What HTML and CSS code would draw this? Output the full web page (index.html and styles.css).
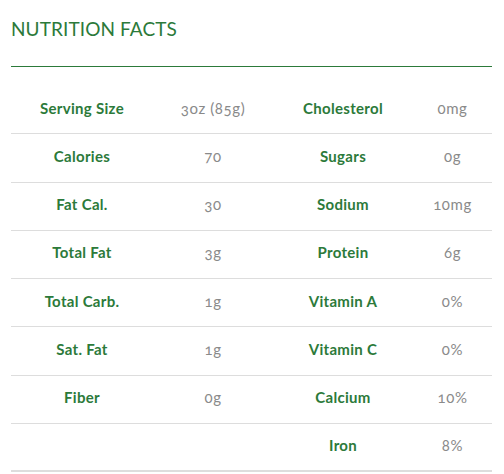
FILE: index.html
```html
<!DOCTYPE html>
<html lang="en">
<head>
    <meta charset="UTF-8">
    <meta name="viewport" content="width=device-width, initial-scale=1.0">
    <title>Nutrition Facts</title>
    <link rel="stylesheet" href="styles.css">
</head>
<body>
    <div class="panel">
        <h2 class="panel-title">NUTRITION FACTS</h2>

        <div class="facts">
            <div class="row">
                <span class="label">Serving Size</span><span class="value">3oz (85g)</span>
                <span class="label">Cholesterol</span><span class="value">0mg</span>
            </div>
            <div class="row">
                <span class="label">Calories</span><span class="value">70</span>
                <span class="label">Sugars</span><span class="value">0g</span>
            </div>
            <div class="row">
                <span class="label">Fat Cal.</span><span class="value">30</span>
                <span class="label">Sodium</span><span class="value">10mg</span>
            </div>
            <div class="row">
                <span class="label">Total Fat</span><span class="value">3g</span>
                <span class="label">Protein</span><span class="value">6g</span>
            </div>
            <div class="row">
                <span class="label">Total Carb.</span><span class="value">1g</span>
                <span class="label">Vitamin A</span><span class="value">0%</span>
            </div>
            <div class="row">
                <span class="label">Sat. Fat</span><span class="value">1g</span>
                <span class="label">Vitamin C</span><span class="value">0%</span>
            </div>
            <div class="row">
                <span class="label">Fiber</span><span class="value">0g</span>
                <span class="label">Calcium</span><span class="value">10%</span>
            </div>
            <div class="row last">
                <span class="label"></span><span class="value"></span>
                <span class="label">Iron</span><span class="value">8%</span>
            </div>
        </div>
    </div>
</body>
</html>
```

FILE: styles.css
```css
:root {
    --green: #2c7a3a;
    --grey: #8a8a8a;
    --rule: #dddddd;
}

body {
    margin: 0;
    background: #fff;
    font-family: Lato, "Open Sans", sans-serif;
}

.panel {
    padding: 0 12px 0 11px;
}

.panel-title {
    margin: 0;
    padding-top: 17px;
    height: 67px;
    box-sizing: border-box;
    border-bottom: 1px solid var(--green);
    font-size: 19px;
    font-weight: 400;
    line-height: 24px;
    letter-spacing: 0.1px;
    color: var(--green);
}

.facts {
    margin-top: 19px;
}

.row {
    display: grid;
    grid-template-columns: 142px 120px 140px 1fr;
    height: 48.25px;
    padding-bottom: 4px;
    align-items: center;
    border-bottom: 1px solid var(--rule);
    box-sizing: border-box;
    text-align: center;
}

.row.last {
    border-bottom: 2px solid var(--rule);
}

.label {
    font-size: 15px;
    font-weight: 700;
    letter-spacing: 0.3px;
    color: var(--green);
}

.value {
    font-size: 15px;
    font-weight: 400;
    letter-spacing: 0.6px;
    color: var(--grey);
    font-variant-numeric: oldstyle-nums;
}
```
